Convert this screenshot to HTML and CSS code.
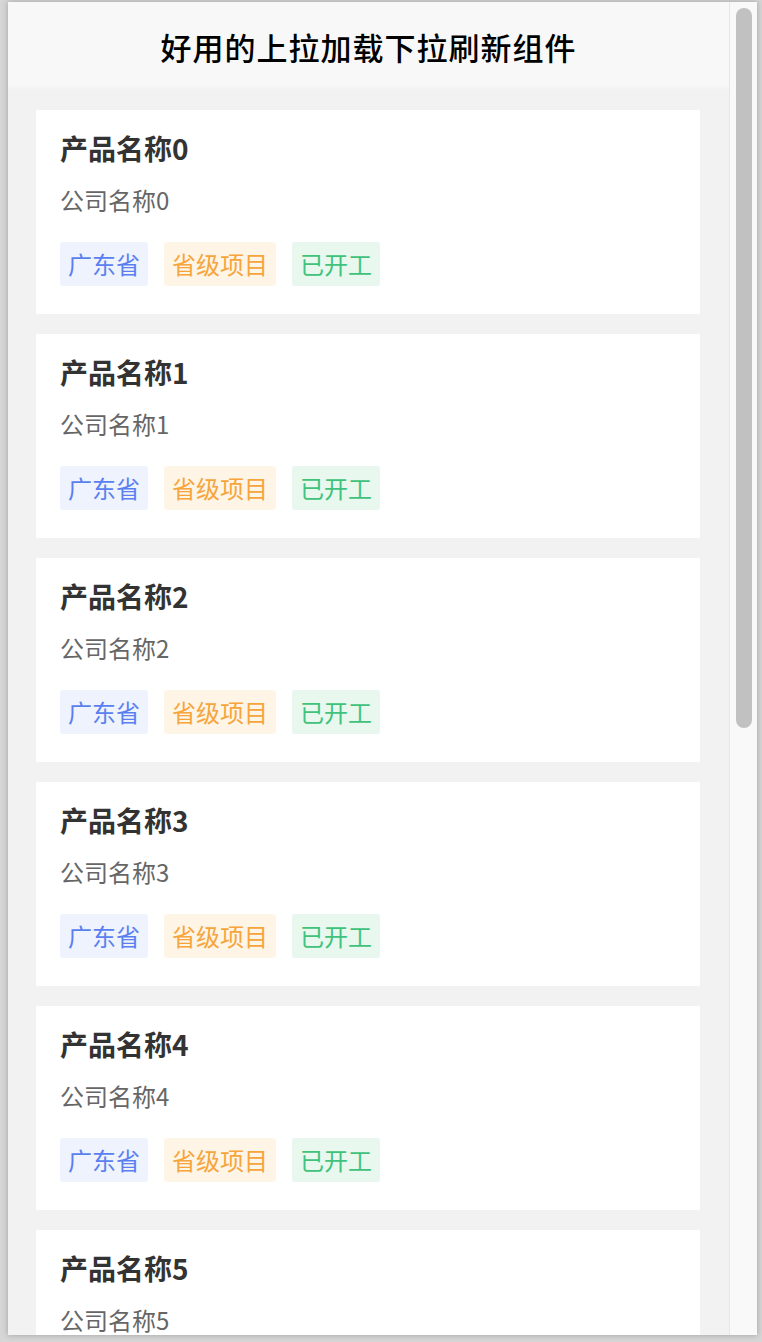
FILE: index.html
```html
<!DOCTYPE html>
<html lang="zh-CN">
<head>
  <meta charset="UTF-8">
  <title>好用的上拉加载下拉刷新组件</title>
  <link rel="stylesheet" href="styles.css">
</head>
<body>
  <div class="frame">
    <div class="page">
      <div class="header">
        <h1>好用的上拉加载下拉刷新组件</h1>
      </div>

      <div class="list" id="list"></div>
    </div>

    <div class="scrollbar">
      <div class="thumb"></div>
    </div>
  </div>

  <script>
    const list = document.getElementById("list");
    for (let i = 0; i < 6; i++) {
      const card = document.createElement("div");
      card.className = "card";
      card.innerHTML =
        '<div class="name">产品名称' + i + '</div>' +
        '<div class="company">公司名称' + i + '</div>' +
        '<div class="tags">' +
          '<span class="tag blue">广东省</span>' +
          '<span class="tag orange">省级项目</span>' +
          '<span class="tag green">已开工</span>' +
        '</div>';
      list.appendChild(card);
    }
  </script>
</body>
</html>
```

FILE: styles.css
```css
html, body {
  margin: 0;
  padding: 0;
}

body {
  background-color: #d6d6d6;
  font-family: "Noto Sans CJK SC", "Noto Sans", sans-serif;
  height: 1342px;
  overflow: hidden;
}

.frame {
  margin: 2px 5px 0 8px;
  height: 1333px;
  display: flex;
  background-color: #f2f2f2;
  box-shadow: 0 0 6px rgba(0, 0, 0, 0.25);
}

.page {
  flex: 1;
  overflow: hidden;
}

.scrollbar {
  width: 28px;
  background-color: #f9f9f9;
  border-left: 1px solid #e6e6e6;
  padding: 6px 5px 0 6px;
  box-sizing: border-box;
}

.thumb {
  height: 720px;
  background-color: #c1c1c1;
  border-radius: 8px;
}

.header {
  height: 88px;
  background: linear-gradient(#f8f8f8 0, #f8f8f8 82px, #f2f2f2 88px);
  display: flex;
  align-items: center;
  justify-content: center;
}

h1 {
  margin: 0;
  font-size: 31px;
  font-weight: 500;
  letter-spacing: 1px;
  color: #000;
}

.list {
  display: flex;
  flex-direction: column;
  gap: 20px;
  padding: 20px 29px 0 28px;
}

.card {
  background-color: #fff;
  padding: 24px 24px 28px 24px;
}

.name {
  font-size: 28px;
  line-height: 28px;
  font-weight: bold;
  color: #333;
}

.company {
  font-size: 24px;
  line-height: 24px;
  color: #666;
  margin-top: 26px;
}

.tags {
  display: flex;
  gap: 16px;
  margin-top: 30px;
}

.tag {
  font-size: 24px;
  line-height: 28px;
  padding: 8px 8px;
  border-radius: 3px;
}

.blue {
  color: #5b7ff0;
  background-color: #eef3fd;
}

.orange {
  color: #f5a53c;
  background-color: #fff5e6;
}

.green {
  color: #3fc27b;
  background-color: #e8f8ee;
}
```
